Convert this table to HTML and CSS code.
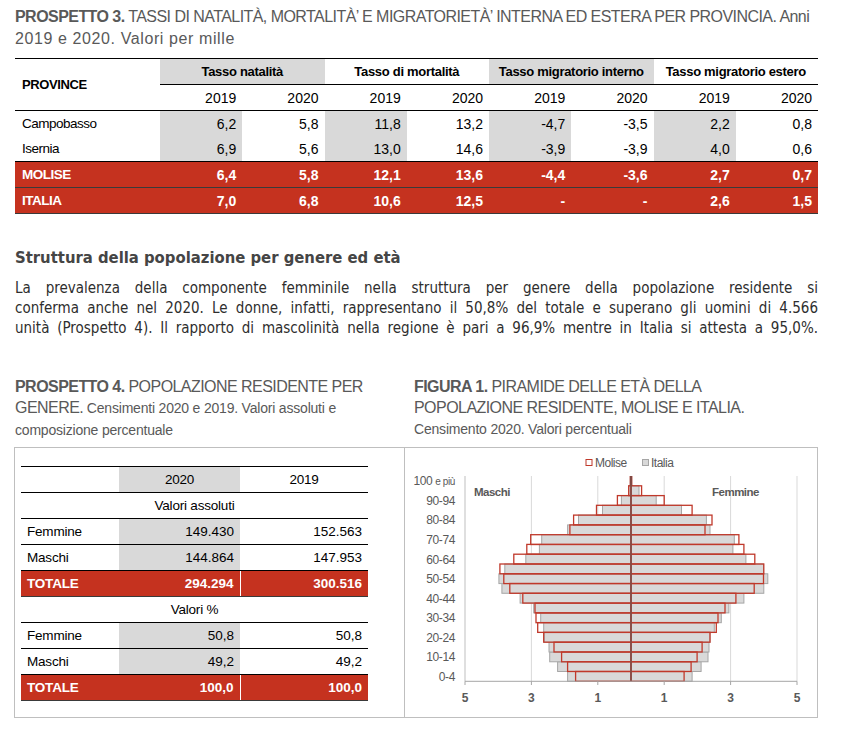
FILE: index.html
```html
<!DOCTYPE html>
<html lang="it">
<head>
<meta charset="utf-8">
<title>Prospetti</title>
<link rel="stylesheet" href="styles.css">
</head>
<body>
<div class="page">
  <div class="caption"><span class="caps"><b>PROSPETTO 3.</b> TASSI DI NATALITÀ, MORTALITÀ’ E MIGRATORIETÀ’ INTERNA ED ESTERA PER PROVINCIA. Anni</span><br><span class="lower">2019 e 2020. Valori per mille</span></div>

  <table class="t1">
    <colgroup><col class="c-prov"><col class="c-n"><col class="c-n"><col class="c-n"><col class="c-n"><col class="c-n"><col class="c-n"><col class="c-n"><col class="c-n"></colgroup>
    <thead>
      <tr class="h1">
        <th rowspan="2" class="prov">PROVINCE</th>
        <th colspan="2" class="grp g">Tasso natalità</th>
        <th colspan="2" class="grp">Tasso di mortalità</th>
        <th colspan="2" class="grp g">Tasso migratorio interno</th>
        <th colspan="2" class="grp">Tasso migratorio estero</th>
      </tr>
      <tr class="h2">
        <th>2019</th><th>2020</th><th>2019</th><th>2020</th><th>2019</th><th>2020</th><th>2019</th><th>2020</th>
      </tr>
    </thead>
    <tbody>
      <tr>
        <td class="name">Campobasso</td><td class="g">6,2</td><td>5,8</td><td class="g">11,8</td><td>13,2</td><td class="g">-4,7</td><td>-3,5</td><td class="g">2,2</td><td>0,8</td>
      </tr>
      <tr class="sep">
        <td class="name">Isernia</td><td class="g">6,9</td><td>5,6</td><td class="g">13,0</td><td>14,6</td><td class="g">-3,9</td><td>-3,9</td><td class="g">4,0</td><td>0,6</td>
      </tr>
      <tr class="red">
        <td class="name">MOLISE</td><td>6,4</td><td>5,8</td><td>12,1</td><td>13,6</td><td>-4,4</td><td>-3,6</td><td>2,7</td><td>0,7</td>
      </tr>
      <tr class="red">
        <td class="name">ITALIA</td><td>7,0</td><td>6,8</td><td>10,6</td><td>12,5</td><td>-</td><td>-</td><td>2,6</td><td>1,5</td>
      </tr>
    </tbody>
  </table>

  <h2 class="sec-title">Struttura della popolazione per genere ed età</h2>
  <p class="para">La prevalenza della componente femminile nella struttura per genere della popolazione residente si<br>conferma anche nel 2020. Le donne, infatti, rappresentano il 50,8% del totale e superano gli uomini di 4.566<br>unità (Prospetto 4). Il rapporto di mascolinità nella regione è pari a 96,9% mentre in Italia si attesta a 95,0%.</p>

  <div class="figs">
    <div class="fig-left">
      <div class="fig-cap cap-left"><span class="caps"><b>PROSPETTO 4.</b> POPOLAZIONE RESIDENTE PER<br>GENERE.</span><span class="sub"> Censimenti 2020 e 2019. Valori assoluti e<br>composizione percentuale</span></div>
      <div class="box box-left">
        <table class="t4">
          <colgroup><col class="c4-l"><col class="c4-a"><col class="c4-b"></colgroup>
          <tr class="hd"><td></td><td class="g ctr">2020</td><td class="ctr">2019</td></tr>
          <tr class="sub-h"><td colspan="3" class="ctr">Valori assoluti</td></tr>
          <tr><td class="name">Femmine</td><td class="g">149.430</td><td>152.563</td></tr>
          <tr><td class="name">Maschi</td><td class="g">144.864</td><td>147.953</td></tr>
          <tr class="red"><td class="name">TOTALE</td><td class="wsep">294.294</td><td>300.516</td></tr>
          <tr class="sub-h"><td colspan="3" class="ctr">Valori %</td></tr>
          <tr><td class="name">Femmine</td><td class="g">50,8</td><td>50,8</td></tr>
          <tr><td class="name">Maschi</td><td class="g">49,2</td><td>49,2</td></tr>
          <tr class="red"><td class="name">TOTALE</td><td class="wsep">100,0</td><td>100,0</td></tr>
        </table>
      </div>
    </div>
    <div class="fig-right">
      <div class="fig-cap cap-right"><span class="caps"><b>FIGURA 1.</b> PIRAMIDE DELLE ETÀ DELLA<br>POPOLAZIONE RESIDENTE, MOLISE E ITALIA.</span><br><span class="sub">Censimento 2020. Valori percentuali</span></div>
      <div class="box box-right">
        <svg class="chart" width="412" height="269" viewBox="0 0 412 269" xmlns="http://www.w3.org/2000/svg">
          <g transform="translate(-405,-448)">
            <!-- legend -->
            <rect x="586" y="459.5" width="6" height="6" fill="#fff" stroke="#c0392b" stroke-width="1"/>
            <text x="595" y="467" class="lg">Molise</text>
            <rect x="642.5" y="459.5" width="6" height="6" fill="#d9d9d9" stroke="#a6a6a6" stroke-width="1"/>
            <text x="651" y="467" class="lg">Italia</text>

            <!-- gridlines -->
            <g stroke="#d9d9d9" stroke-width="1">
              <line x1="531.4" y1="476" x2="531.4" y2="681.3"/>
              <line x1="597.8" y1="476" x2="597.8" y2="681.3"/>
              <line x1="664.2" y1="476" x2="664.2" y2="681.3"/>
              <line x1="730.6" y1="476" x2="730.6" y2="681.3"/>
              <line x1="797" y1="476" x2="797" y2="681.3"/>
            </g>
            <line x1="465" y1="476" x2="465" y2="681.3" stroke="#bfbfbf" stroke-width="1"/>

            <text x="474" y="495.5" class="sx">Maschi</text>
            <text x="712" y="495.5" class="sx">Femmine</text>

            <!-- Italia bars -->
            <g fill="#d9d9d9" stroke="#a6a6a6" stroke-width="1">
              <rect x="567.6" y="671.5" width="63.4" height="9.78"/>
              <rect x="557.6" y="661.7" width="73.4" height="9.78"/>
              <rect x="549.7" y="652.0" width="81.3" height="9.78"/>
              <rect x="549.0" y="642.2" width="82.0" height="9.78"/>
              <rect x="544.3" y="632.4" width="86.7" height="9.78"/>
              <rect x="543.7" y="622.6" width="87.3" height="9.78"/>
              <rect x="540.7" y="612.9" width="90.3" height="9.78"/>
              <rect x="533.7" y="603.1" width="97.3" height="9.78"/>
              <rect x="520.1" y="593.3" width="110.9" height="9.78"/>
              <rect x="501.9" y="583.5" width="129.1" height="9.78"/>
              <rect x="498.9" y="573.8" width="132.1" height="9.78"/>
              <rect x="504.8" y="564.0" width="126.2" height="9.78"/>
              <rect x="525.8" y="554.2" width="105.2" height="9.78"/>
              <rect x="539.4" y="544.4" width="91.6" height="9.78"/>
              <rect x="541.7" y="534.7" width="89.3" height="9.78"/>
              <rect x="567.6" y="524.9" width="63.4" height="9.78"/>
              <rect x="578.5" y="515.1" width="52.5" height="9.78"/>
              <rect x="602.5" y="505.3" width="28.5" height="9.78"/>
              <rect x="621.4" y="495.6" width="9.6" height="9.78"/>
              <rect x="628.7" y="485.8" width="2.3" height="9.78"/>

              <rect x="631" y="671.5" width="61.1" height="9.78"/>
              <rect x="631" y="661.7" width="70.1" height="9.78"/>
              <rect x="631" y="652.0" width="77.0" height="9.78"/>
              <rect x="631" y="642.2" width="78.0" height="9.78"/>
              <rect x="631" y="632.4" width="79.0" height="9.78"/>
              <rect x="631" y="622.6" width="83.3" height="9.78"/>
              <rect x="631" y="612.9" width="90.3" height="9.78"/>
              <rect x="631" y="603.1" width="97.9" height="9.78"/>
              <rect x="631" y="593.3" width="112.9" height="9.78"/>
              <rect x="631" y="583.5" width="132.8" height="9.78"/>
              <rect x="631" y="573.8" width="136.8" height="9.78"/>
              <rect x="631" y="564.0" width="132.5" height="9.78"/>
              <rect x="631" y="554.2" width="114.9" height="9.78"/>
              <rect x="631" y="544.4" width="101.9" height="9.78"/>
              <rect x="631" y="534.7" width="103.3" height="9.78"/>
              <rect x="631" y="524.9" width="79.0" height="9.78"/>
              <rect x="631" y="515.1" width="75.4" height="9.78"/>
              <rect x="631" y="505.3" width="50.5" height="9.78"/>
              <rect x="631" y="495.6" width="25.2" height="9.78"/>
              <rect x="631" y="485.8" width="8.0" height="9.78"/>
            </g>

            <!-- Molise bars -->
            <g fill="none" stroke="#c0392b" stroke-width="1.3">
              <rect x="575.6" y="671.5" width="55.4" height="9.78"/>
              <rect x="567.6" y="661.7" width="63.4" height="9.78"/>
              <rect x="561.6" y="652.0" width="69.4" height="9.78"/>
              <rect x="554.0" y="642.2" width="77.0" height="9.78"/>
              <rect x="543.7" y="632.4" width="87.3" height="9.78"/>
              <rect x="537.7" y="622.6" width="93.3" height="9.78"/>
              <rect x="536.0" y="612.9" width="95.0" height="9.78"/>
              <rect x="535.0" y="603.1" width="96.0" height="9.78"/>
              <rect x="522.8" y="593.3" width="108.2" height="9.78"/>
              <rect x="509.8" y="583.5" width="121.2" height="9.78"/>
              <rect x="503.8" y="573.8" width="127.2" height="9.78"/>
              <rect x="499.9" y="564.0" width="131.1" height="9.78"/>
              <rect x="513.8" y="554.2" width="117.2" height="9.78"/>
              <rect x="526.8" y="544.4" width="104.2" height="9.78"/>
              <rect x="530.7" y="534.7" width="100.3" height="9.78"/>
              <rect x="569.9" y="524.9" width="61.1" height="9.78"/>
              <rect x="573.6" y="515.1" width="57.4" height="9.78"/>
              <rect x="596.5" y="505.3" width="34.5" height="9.78"/>
              <rect x="617.4" y="495.6" width="13.6" height="9.78"/>
              <rect x="628.7" y="485.8" width="2.3" height="9.78"/>

              <rect x="631" y="671.5" width="53.1" height="9.78"/>
              <rect x="631" y="661.7" width="60.1" height="9.78"/>
              <rect x="631" y="652.0" width="66.1" height="9.78"/>
              <rect x="631" y="642.2" width="71.1" height="9.78"/>
              <rect x="631" y="632.4" width="79.0" height="9.78"/>
              <rect x="631" y="622.6" width="85.3" height="9.78"/>
              <rect x="631" y="612.9" width="87.0" height="9.78"/>
              <rect x="631" y="603.1" width="94.0" height="9.78"/>
              <rect x="631" y="593.3" width="104.9" height="9.78"/>
              <rect x="631" y="583.5" width="123.2" height="9.78"/>
              <rect x="631" y="573.8" width="132.5" height="9.78"/>
              <rect x="631" y="564.0" width="132.8" height="9.78"/>
              <rect x="631" y="554.2" width="123.8" height="9.78"/>
              <rect x="631" y="544.4" width="112.9" height="9.78"/>
              <rect x="631" y="534.7" width="107.9" height="9.78"/>
              <rect x="631" y="524.9" width="74.0" height="9.78"/>
              <rect x="631" y="515.1" width="81.0" height="9.78"/>
              <rect x="631" y="505.3" width="61.1" height="9.78"/>
              <rect x="631" y="495.6" width="33.2" height="9.78"/>
              <rect x="631" y="485.8" width="10.6" height="9.78"/>
            </g>
            <rect x="629.6" y="476" width="2.8" height="9.78" fill="#a8392c"/>

            <!-- center axis -->
            <line x1="631" y1="476" x2="631" y2="681.3" stroke="#595959" stroke-width="1"/>

            <!-- bottom axis -->
            <g stroke="#a6a6a6" stroke-width="1">
              <line x1="465" y1="681.3" x2="797" y2="681.3"/>
              <line x1="465" y1="681.3" x2="465" y2="685"/>
              <line x1="531.4" y1="681.3" x2="531.4" y2="685"/>
              <line x1="597.8" y1="681.3" x2="597.8" y2="685"/>
              <line x1="664.2" y1="681.3" x2="664.2" y2="685"/>
              <line x1="730.6" y1="681.3" x2="730.6" y2="685"/>
              <line x1="797" y1="681.3" x2="797" y2="685"/>
            </g>

            <!-- y labels -->
            <g class="yl">
              <text x="455" y="680.8">0-4</text>
              <text x="455" y="661.2">10-14</text>
              <text x="455" y="641.7">20-24</text>
              <text x="455" y="622.1">30-34</text>
              <text x="455" y="602.6">40-44</text>
              <text x="455" y="583.0">50-54</text>
              <text x="455" y="563.5">60-64</text>
              <text x="455" y="543.9">70-74</text>
              <text x="455" y="524.4">80-84</text>
              <text x="455" y="504.8">90-94</text>
              <text x="455" y="485.2">100 <tspan class="small">e più</tspan></text>
            </g>

            <!-- x labels -->
            <g class="xl">
              <text x="465" y="702">5</text>
              <text x="531.4" y="702">3</text>
              <text x="597.8" y="702">1</text>
              <text x="664.2" y="702">1</text>
              <text x="730.6" y="702">3</text>
              <text x="797" y="702">5</text>
            </g>
          </g>
        </svg>
      </div>
    </div>
  </div>
</div>
</body>
</html>
```

FILE: styles.css
```css
html, body {
  margin: 0;
  padding: 0;
  background: #fff;
}

body {
  font-family: "Liberation Sans", Arial, sans-serif;
  color: #000;
}

.page {
  width: 803px;
  padding: 6px 0 0 15px;
}

.caption {
  color: #595959;
  font-size: 16px;
  line-height: 21.5px;
  white-space: nowrap;
}

.caps {
  letter-spacing: -0.55px;
}

.caption .lower {
  letter-spacing: 0.6px;
}

.caption b,
.fig-cap b {
  font-weight: bold;
}

/* ---------- Prospetto 3 ---------- */
.t1 {
  margin-top: 9px;
  width: 803px;
  border-collapse: collapse;
  table-layout: fixed;
  font-size: 14px;
  border-top: 1px solid #000;
  border-bottom: 1px solid #000;
}

.t1 col.c-prov { width: 145px; }
.t1 col.c-n { width: 82.25px; }

.t1 th,
.t1 td {
  height: 25px;
  padding: 0 6px;
  text-align: right;
  white-space: nowrap;
}

.t1 th {
  font-weight: normal;
}

.t1 .h1 th.grp {
  font-size: 13px;
  letter-spacing: -0.3px;
  font-weight: bold;
  text-align: center;
  padding: 0;
  border-bottom: 1px solid #000;
}

.t1 th.prov {
  font-size: 13px;
  letter-spacing: -0.4px;
  font-weight: bold;
  text-align: left;
  padding-left: 7px;
  border-bottom: 1px solid #000;
}

.t1 .h2 th {
  border-bottom: 1px solid #000;
}

.t1 td.name {
  font-size: 13.5px;
  letter-spacing: -0.5px;
  text-align: left;
  padding-left: 7px;
}

.t1 .g {
  background: #d9d9d9;
}

.t1 tr.sep td {
  border-bottom: 1px solid #000;
}

.t1 tr.red td {
  background: #c5321f;
  color: #fff;
  font-weight: bold;
  border-bottom: 1px solid #3a3a3a;
}

/* ---------- section text ---------- */
.sec-title {
  margin: 34px 0 0;
  font-family: "DejaVu Sans Condensed", "DejaVu Sans", sans-serif;
  font-stretch: condensed;
  font-weight: 700;
  font-size: 16.5px;
  line-height: 20px;
  color: #454545;
}

.para {
  margin: 10px 0 0;
  font-family: "DejaVu Sans Condensed", "DejaVu Sans", sans-serif;
  font-stretch: condensed;
  font-weight: normal;
  font-size: 15px;
  line-height: 20px;
  color: #2e2e2e;
  text-align: justify;
  text-align-last: justify;
}

/* ---------- figures row ---------- */
.figs {
  display: flex;
  margin: 38px 0 0 -1px;
}

.fig-left {
  width: 391px;
}

.fig-right {
  width: 413px;
}

.fig-cap {
  height: 71px;
  color: #595959;
  font-size: 16px;
  line-height: 21px;
  white-space: nowrap;
}

.fig-cap .sub {
  font-size: 14px;
  letter-spacing: -0.2px;
}

.cap-left {
  padding-left: 1px;
}

.cap-right {
  padding-left: 9px;
}

.box {
  box-sizing: border-box;
  height: 271px;
  border: 1px solid #bfbfbf;
}

.box-left {
  padding: 18px 0 0 6px;
}

.box-right {
  border-left: none;
}

.chart {
  display: block;
}

/* ---------- Prospetto 4 ---------- */
.t4 {
  width: 347px;
  border-collapse: collapse;
  table-layout: fixed;
  font-size: 13.5px;
  border-top: 1px solid #000;
}

.t4 col.c4-l { width: 98px; }
.t4 col.c4-a { width: 121px; }
.t4 col.c4-b { width: 128px; }

.t4 td {
  height: 25px;
  padding: 0 6px;
  text-align: right;
  border-bottom: 1px solid #000;
  white-space: nowrap;
}

.t4 td.name {
  letter-spacing: -0.2px;
  text-align: left;
}

.t4 td.ctr {
  letter-spacing: -0.2px;
  text-align: center;
}

.t4 .g {
  background: #d9d9d9;
}

.t4 tr.red td {
  background: #c5321f;
  color: #fff;
  font-weight: bold;
  border-bottom: 1px solid #3a3a3a;
}

.t4 tr.red td.wsep {
  border-right: 1px solid #fff;
}

/* ---------- chart text ---------- */
.chart text {
  font-family: "Liberation Sans", Arial, sans-serif;
  fill: #595959;
}

.chart .lg {
  font-size: 12px;
  letter-spacing: -0.5px;
}

.chart .sx {
  font-size: 11.5px;
  letter-spacing: -0.5px;
  font-weight: bold;
}

.chart .yl text {
  font-size: 12px;
  letter-spacing: -0.4px;
  text-anchor: end;
}

.chart .yl .small {
  font-size: 10px;
}

.chart .xl text {
  font-size: 12px;
  font-weight: bold;
  text-anchor: middle;
}
```
